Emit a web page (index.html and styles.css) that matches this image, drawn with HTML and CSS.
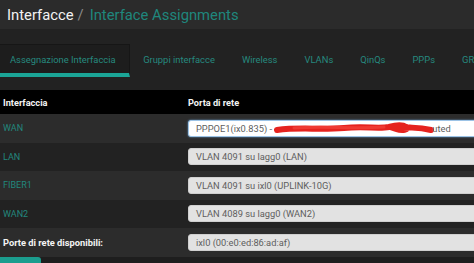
FILE: index.html
```html
<!DOCTYPE html>
<html lang="it">
<head>
    <meta charset="UTF-8">
    <meta name="viewport" content="width=device-width, initial-scale=1.0">
    <title>Interface Assignments</title>
    <link rel="stylesheet" href="styles.css">
</head>
<body>
    <!-- Breadcrumb title -->
    <header class="page-title">
        <span class="crumb">Interfacce</span>
        <span class="sep">/</span>
        <span class="crumb-current">Interface Assignments</span>
    </header>

    <!-- Tabs -->
    <nav class="tabs">
        <a class="tab active">Assegnazione Interfaccia</a>
        <a class="tab">Gruppi interfacce</a>
        <a class="tab">Wireless</a>
        <a class="tab">VLANs</a>
        <a class="tab">QinQs</a>
        <a class="tab">PPPs</a>
        <a class="tab">GREs</a>
    </nav>

    <!-- Assignments table -->
    <div class="assign-table">
        <div class="row head">
            <div class="cell">Interfaccia</div>
            <div class="cell">Porta di rete</div>
        </div>
        <div class="row odd">
            <div class="cell if-name">WAN</div>
            <div class="cell">
                <div class="field focused">PPPOE1(ix0.835) - <span class="redact"><svg width="160" height="15" viewBox="0 0 160 15">
                        <path d="M3 9 C25 6 45 9 70 7 C90 5 105 8 115 6 C122 4 128 3 132 6 C136 9 128 10 122 8 C130 6 145 6 157 9" fill="none" stroke="#e5231f" stroke-width="6" stroke-linecap="round"/>
                        <path d="M20 7 C50 5 80 8 110 6" fill="none" stroke="#ef3a33" stroke-width="3" stroke-linecap="round"/>
                    </svg></span>uted</div>
            </div>
        </div>
        <div class="row even">
            <div class="cell if-name">LAN</div>
            <div class="cell"><div class="field">VLAN 4091 su lagg0 (LAN)</div></div>
        </div>
        <div class="row odd">
            <div class="cell if-name">FIBER1</div>
            <div class="cell"><div class="field">VLAN 4091 su ixl0 (UPLINK-10G)</div></div>
        </div>
        <div class="row even">
            <div class="cell if-name">WAN2</div>
            <div class="cell"><div class="field">VLAN 4089 su lagg0 (WAN2)</div></div>
        </div>
        <div class="row odd">
            <div class="cell avail">Porte di rete disponibili:</div>
            <div class="cell"><div class="field">ixl0 (00:e0:ed:86:ad:af)</div></div>
        </div>
    </div>

    <div class="footer-bar">
        <span class="save-btn"></span>
    </div>
</body>
</html>
```

FILE: styles.css
```css
body {
    font-family: 'Roboto', 'Liberation Sans', sans-serif;
    background-color: #1e1e1e;
    color: #ddd;
    margin: 0;
    overflow: hidden;
}

.page-title {
    height: 29px;
    background-color: #2b2b2b;
    padding-left: 7px;
    display: flex;
    align-items: center;
    font-size: 14.8px;
    white-space: nowrap;
}

.crumb {
    color: #f2f2f2;
}

.sep {
    color: #8a8a8a;
    margin: 0 6px 0 4px;
}

.crumb-current {
    color: #1f877d;
}

.tabs {
    height: 61px;
    background-color: #222;
    display: flex;
    align-items: flex-start;
    white-space: nowrap;
    overflow: hidden;
}

.tab {
    font-size: 9.4px;
    color: #26897f;
    padding: 0 13.5px;
    margin-top: 15px;
    height: 33px;
    line-height: 31px;
    box-sizing: border-box;
}

.tab.active {
    padding-left: 10px;
    padding-right: 13px;
    background-color: #1d1d1d;
    border: 1px solid #161616;
    border-left: none;
    border-bottom: 4px solid #1ba597;
    line-height: 29px;
}

.row {
    display: grid;
    grid-template-columns: 188px 300px;
    align-items: center;
    height: 28.5px;
}

.row.head {
    height: 24px;
    background-color: #000;
    font-size: 9.2px;
    font-weight: bold;
    color: #f4f4f4;
}

.row.head .cell:first-child {
    padding-left: 3px;
}

.row.odd {
    background-color: #2c2c2c;
}

.row.even {
    background-color: #222;
}

.if-name {
    padding-left: 3px;
    font-size: 9px;
    color: #22877d;
}

.avail {
    padding-left: 3px;
    font-size: 9.3px;
    font-weight: bold;
    color: #f4f4f4;
}

.field {
    height: 17px;
    box-sizing: border-box;
    background-color: #e2e2e2;
    border: 1px solid #cfcfcf;
    border-radius: 3px;
    padding-left: 7px;
    font-size: 9.3px;
    line-height: 15px;
    color: #5e5e5e;
    white-space: nowrap;
    overflow: hidden;
}

.field.focused {
    background-color: #fff;
    border-color: #9cc3e6;
    box-shadow: 0 0 2px #6fa8dc;
}

.redact {
    display: inline-block;
    width: 158px;
    height: 15px;
    vertical-align: top;
}

.redact svg {
    display: block;
}

.footer-bar {
    height: 10px;
}

.save-btn {
    display: block;
    width: 41px;
    height: 8px;
    background-color: #1b9d8e;
    border-radius: 0 3px 0 0;
}
```
